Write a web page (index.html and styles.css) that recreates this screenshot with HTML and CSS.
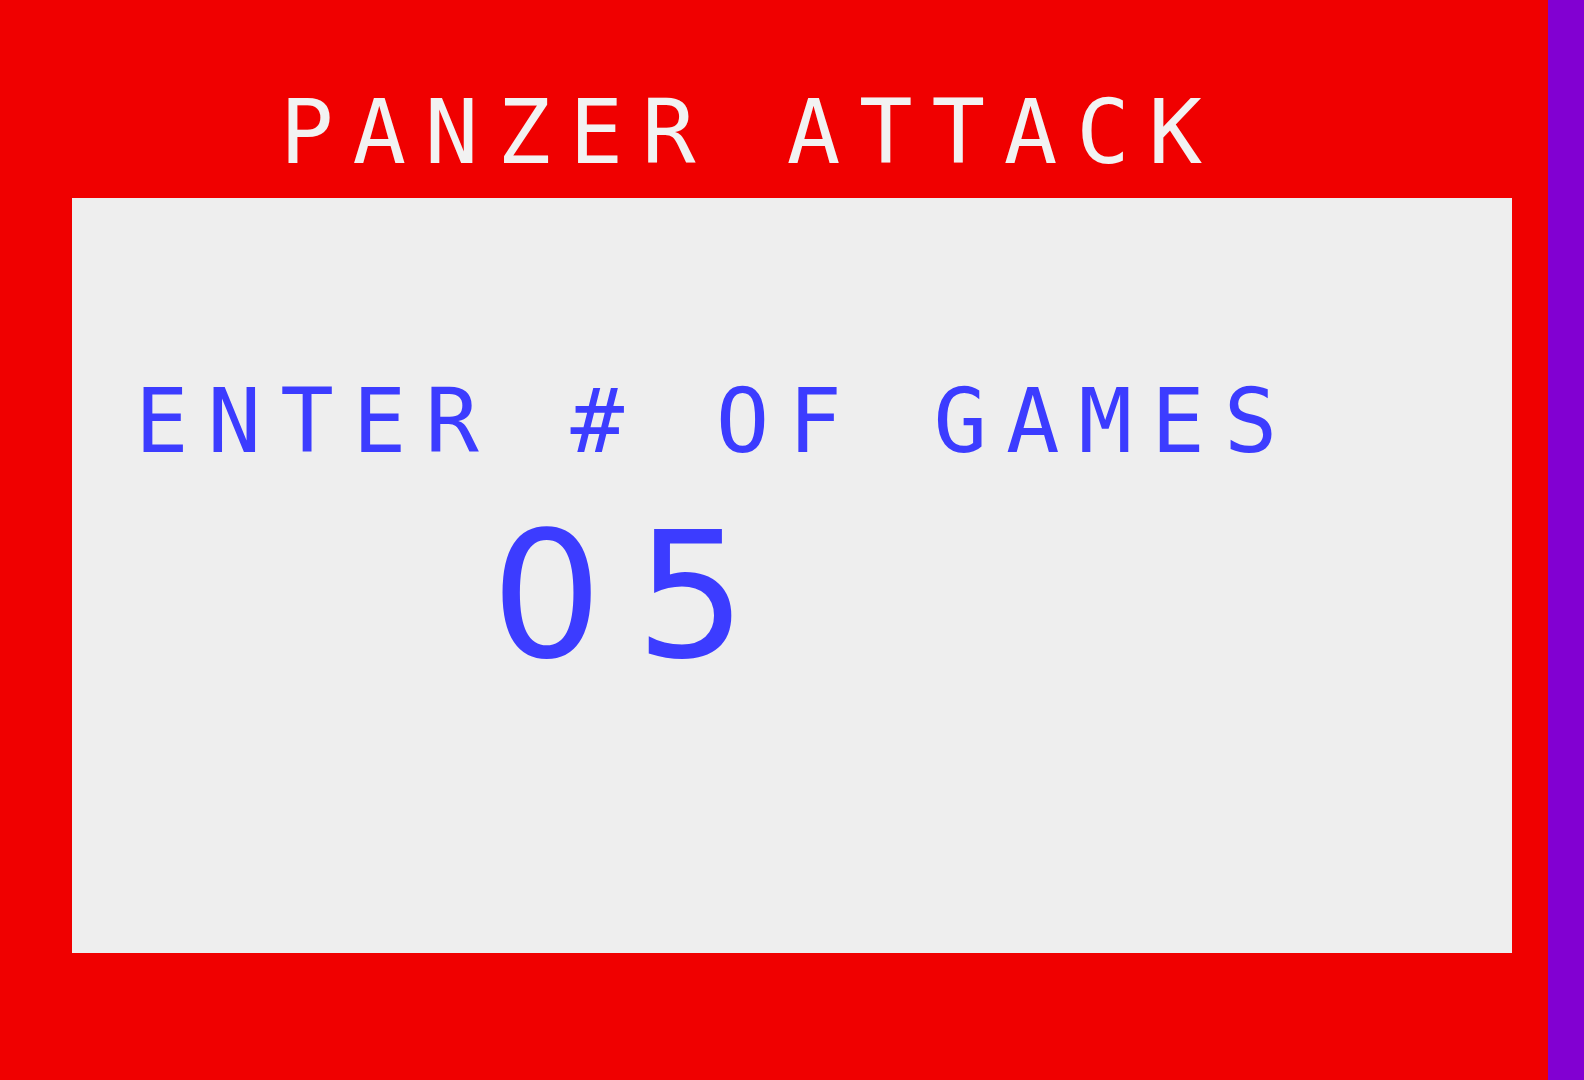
FILE: index.html
```html
<!DOCTYPE html>
<html>
<head>
<meta charset="utf-8">
<title>Panzer Attack</title>
<link rel="stylesheet" href="styles.css">
</head>
<body>
<div class="screen">
  <div class="playfield">
    <div class="title">PANZER ATTACK</div>
    <div class="panel">
      <div class="prompt">ENTER # OF GAMES</div>
      <div class="count">05</div>
    </div>
  </div>
  <div class="border-strip"></div>
</div>
</body>
</html>
```
FILE: styles.css
```css
html, body {
  margin: 0;
  padding: 0;
  background: #f00000;
}
.screen {
  display: flex;
  width: 1584px;
  height: 1080px;
  overflow: hidden;
}
.playfield {
  width: 1548px;
  height: 1080px;
  background: #f00000;
  display: flex;
  flex-direction: column;
}
.border-strip {
  width: 36px;
  height: 1080px;
  background: #8200d2;
}
.title {
  font-family: "DejaVu Sans Mono", monospace;
  font-size: 89px;
  line-height: 89px;
  letter-spacing: 18.8px;
  color: #f2f2f2;
  white-space: pre;
  padding-top: 88px;
  padding-left: 280px;
  box-sizing: border-box;
  height: 198px;
}
.panel {
  margin-left: 72px;
  width: 1440px;
  height: 755px;
  background: #eeeeee;
  padding-top: 179px;
  box-sizing: border-box;
}
.prompt {
  font-family: "DejaVu Sans Mono", monospace;
  font-size: 89px;
  line-height: 89px;
  letter-spacing: 19px;
  color: #3c3cff;
  white-space: pre;
  padding-left: 63px;
}
.count {
  font-family: "DejaVu Sans", sans-serif;
  font-size: 175px;
  line-height: 175px;
  letter-spacing: 33px;
  color: #3c3cff;
  white-space: pre;
  margin-top: 43px;
  padding-left: 419px;
}
```
